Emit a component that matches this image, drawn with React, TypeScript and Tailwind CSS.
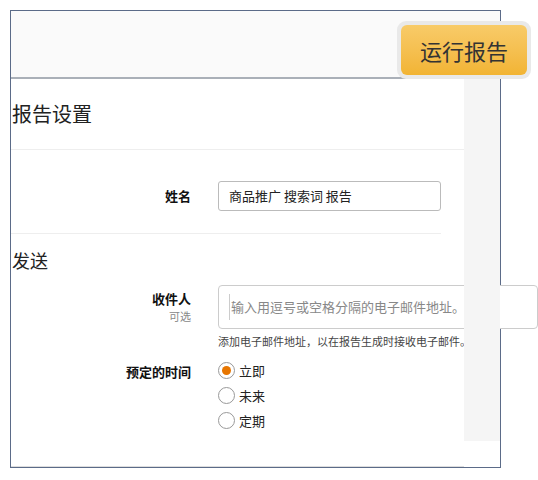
export default function App() {
  const font = { fontFamily: '"Noto Sans CJK SC", "Liberation Sans", sans-serif' };
  return (
    <div className="relative w-[538px] h-[480px] bg-white overflow-hidden" style={font}>
      <div className="absolute left-[10px] top-[10px] w-[491px] h-[458px] border border-[#5b6b88] bg-[#f7f7f7] flex flex-col">
        <div className="h-[68px] bg-[#fafafa] border-b-2 border-[#aab0b8] shrink-0" />
        <div className="flex flex-1">
          <div className="w-[453px] shrink-0 bg-white flex flex-col border-b border-[#ddd]">
            <div className="h-[71px] border-b border-[#eee] flex items-center pl-[1px] text-[20px] text-[#222] leading-none">报告设置</div>
            <div className="flex items-center h-[84px] pt-[9px] border-b border-[#eee] mr-[23px]">
              <div className="w-[180px] shrink-0 text-right text-[13px] font-bold text-[#111]">姓名</div>
              <div className="ml-[27px] w-[229px] h-[30px] border border-[#bbb] rounded-[3px] flex items-center px-[10px] text-[13px] text-[#222]">商品推广 搜索词 报告</div>
            </div>
            <div className="pt-[14px] pl-[1px] text-[18px] text-[#222] leading-[24px]">发送</div>
            <div className="flex mt-[13px]">
              <div className="w-[180px] shrink-0 text-right pt-[5px]">
                <div className="text-[13px] font-bold text-[#111] leading-[18px]">收件人</div>
                <div className="text-[11px] text-[#888] leading-[16px]">可选</div>
              </div>
              <div className="ml-[27px] shrink-0">
                <div className="w-[320px] h-[44px] border border-[#ccc] rounded-[4px] flex items-center px-[10px] text-[13px] text-[#888] bg-white whitespace-nowrap">
                  <span className="w-px h-[26px] bg-[#ccc] mr-[1px]" />输入用逗号或空格分隔的电子邮件地址。
                </div>
                <div className="text-[11px] text-[#444] mt-[4px] whitespace-nowrap">添加电子邮件地址，以在报告生成时接收电子邮件。</div>
              </div>
            </div>
            <div className="flex mt-[12px]">
              <div className="w-[180px] shrink-0 text-right text-[13px] font-bold text-[#111] leading-[18px] pt-[1px]">预定的时间</div>
              <div className="ml-[27px] flex flex-col gap-[7px]">
                {['立即', '未来', '定期'].map((t, i) => (
                  <div key={t} className="flex items-center gap-[4px] text-[13px] text-[#222] leading-[18px]">
                    <span className="w-[17px] h-[17px] rounded-full border border-[#999] flex items-center justify-center bg-white">
                      {i === 0 && <span className="w-[9px] h-[9px] rounded-full bg-[#e77600]" />}
                    </span>
                    {t}
                  </div>
                ))}
              </div>
            </div>
          </div>
          <div className="flex-1 flex flex-col">
            <div className="h-[362px] bg-[#f5f5f5]" />
            <div className="flex-1 bg-white" />
          </div>
        </div>
      </div>
      <div className="absolute left-[397px] top-[21px] p-[4px] rounded-[9px] bg-[#e9e9e9]">
        <div className="w-[126px] h-[50px] rounded-[6px] bg-gradient-to-b from-[#f8cb68] to-[#f2b433] flex items-center justify-center text-[22px] text-[#333]">运行报告</div>
      </div>
    </div>
  );
}
